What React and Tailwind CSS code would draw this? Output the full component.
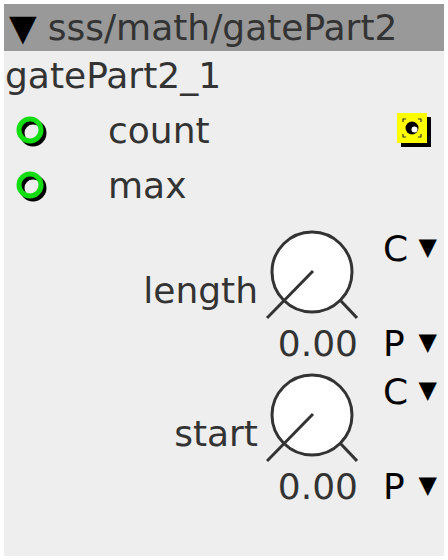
import React from 'react';

const font = { fontFamily: '"DejaVu Sans", sans-serif' };

const Port = () => (
    <svg width="34" height="34" viewBox="0 0 34 34" className="block">
        <circle cx="19" cy="19" r="11" fill="none" stroke="#000" strokeWidth="5" />
        <circle cx="16" cy="16" r="11" fill="none" stroke="#11dd11" strokeWidth="5" />
    </svg>
);

const Trigger = () => (
    <svg width="36" height="36" viewBox="0 0 36 36" className="block">
        <rect x="4" y="4" width="30" height="30" fill="#000" />
        <rect x="0" y="0" width="30" height="30" fill="#ffff00" />
        <path d="M6 9V6h3M21 6h3v3M24 21v3h-3M9 24H6v-3" fill="none" stroke="#333" strokeWidth="1.2" />
        <circle cx="15" cy="15" r="6.5" fill="#000" />
        <circle cx="17.5" cy="16.5" r="3" fill="#fff" />
    </svg>
);

const Knob = () => (
    <svg width="92" height="92" viewBox="0 0 92 92" className="block">
        <circle cx="46" cy="44" r="40" fill="#fff" stroke="#333" strokeWidth="3" />
        <line x1="1" y1="90" x2="47" y2="43" stroke="#333" strokeWidth="3" />
        <line x1="74" y1="72" x2="91" y2="90" stroke="#333" strokeWidth="3" />
    </svg>
);

const KnobGroup = ({ label }) => (
    <div className="flex justify-end pr-[7px]">
        <div className="flex flex-col items-end">
            <div className="flex items-end gap-[8px]">
                <span className="text-[36px] leading-[42px] mb-[8px] text-[#333]">{label}</span>
                <Knob />
            </div>
            <span className="mt-[3px] text-[36px] leading-[42px] text-[#333]">0.00</span>
        </div>
        <div className="w-[54px] ml-[25px] flex flex-col justify-between text-black">
            <div className="flex justify-between items-start">
                <span className="text-[36px] leading-[42px]">C</span>
                <span className="text-[24px] leading-[24px] mt-[7px]">▼</span>
            </div>
            <div className="flex justify-between items-start">
                <span className="text-[36px] leading-[42px]">P</span>
                <span className="text-[24px] leading-[24px] mt-[7px]">▼</span>
            </div>
        </div>
    </div>
);

export default function App() {
    return (
        <div className="w-[448px] h-[560px] bg-white p-[4px]" style={font}>
            <div className="w-[440px] h-[552px] bg-[#eeeeee] flex flex-col">
                <div className="h-[47px] bg-[#999999] flex items-center pl-[5px] text-[36px] leading-[42px] text-[#333]">
                    <span className="text-black">▼</span>
                    <span className="ml-[11px]">sss/math/gatePart2</span>
                </div>

                <div className="mt-[4px] h-[48px] pl-[1px] text-[36px] leading-[42px] text-[#333]">gatePart2_1</div>

                <div className="h-[55px] flex items-center pl-[10px]">
                    <Port />
                    <span className="ml-[60px] text-[36px] leading-[55px] text-[#333] flex-1">count</span>
                    <div className="mr-[11px]"><Trigger /></div>
                </div>
                <div className="h-[55px] flex items-center pl-[10px]">
                    <Port />
                    <span className="ml-[60px] text-[36px] leading-[55px] text-[#333]">max</span>
                </div>

                <div className="mt-[15px] flex flex-col gap-[6px]">
                    <KnobGroup label="length" />
                    <KnobGroup label="start" />
                </div>
            </div>
        </div>
    );
}
